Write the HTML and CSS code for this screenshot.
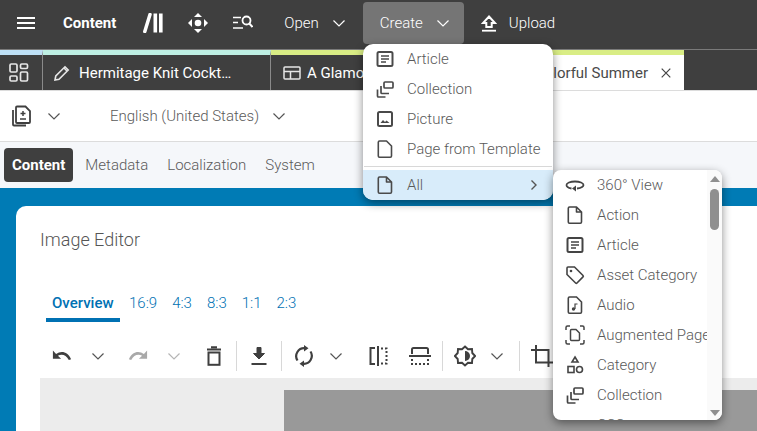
FILE: index.html
```html
<!DOCTYPE html>
<html lang="en">
<head>
<meta charset="utf-8">
<title>Image Editor</title>
<link rel="stylesheet" href="styles.css">
</head>
<body>
<svg class="defs" aria-hidden="true">
  <symbol id="chev" viewBox="0 0 14 14"><path d="M1.500 4.500 7 10l5.500-5.500" fill="none" stroke="currentColor" stroke-width="1.200"/></symbol>
  <symbol id="article" viewBox="0 0 20 20"><rect x="2.500" y="3" width="15" height="14" rx="1.500" fill="none" stroke="currentColor" stroke-width="2"/><path d="M6 7h8M6 10h8M6 13h5" stroke="currentColor" stroke-width="1.400"/></symbol>
  <symbol id="collection" viewBox="0 0 20 20"><g fill="none" stroke="currentColor" stroke-width="1.700"><rect x="9" y="3" width="9" height="6" rx="1"/><path d="M6 7v6.500a1 1 0 0 0 1 1h7"/><path d="M2.500 10.500V17a1 1 0 0 0 1 1h7"/></g></symbol>
  <symbol id="picture" viewBox="0 0 20 20"><rect x="3" y="3" width="14" height="14" rx="1.500" fill="none" stroke="currentColor" stroke-width="2"/><path d="M5.500 14l2.500-3 2 2 1.500-1.500 3 2.500z" fill="currentColor"/></symbol>
  <symbol id="file" viewBox="0 0 20 20"><path d="M4.500 2h7L16.500 7v10a1.200 1.200 0 0 1-1.200 1.200H4.500A1.200 1.200 0 0 1 3.300 17V3.200A1.200 1.200 0 0 1 4.500 2zM11.500 2v5h5" fill="none" stroke="currentColor" stroke-width="1.600" stroke-linejoin="round"/></symbol>
  <symbol id="fileplain" viewBox="0 0 20 20"><path d="M4.500 2h7L16.500 7v10a1.200 1.200 0 0 1-1.200 1.200H4.500A1.200 1.200 0 0 1 3.300 17V3.200A1.200 1.200 0 0 1 4.500 2z" fill="none" stroke="currentColor" stroke-width="1.600" stroke-linejoin="round"/></symbol>
</svg>

<header class="topbar">
  <button class="top-btn burger" type="button" aria-label="Menu">
    <svg class="i18" viewBox="0 0 18 12"><path d="M0 1h18M0 6h18M0 11h18" stroke="#fff" stroke-width="1.800"/></svg>
  </button>
  <span class="brand">Content</span>
  <svg class="lib" viewBox="0 0 20 20"><path d="M1.800 18.500 7 1.500" stroke="#fff" stroke-width="3.500" stroke-linecap="round" fill="none"/><rect x="10.500" y="0.500" width="3.600" height="19" fill="#fff"/><rect x="16" y="0.500" width="3.600" height="19" fill="#fff"/></svg>
  <svg class="move" viewBox="0 0 20 20"><circle cx="10" cy="10" r="3.300" fill="#fff"/><path d="M6 4 10 0l4 4z M6 16l4 4 4-4z M4 6 0 10l4 4z M16 6l4 4-4 4z" fill="#fff"/></svg>
  <svg class="lsearch" viewBox="0 0 20 16"><path d="M0 2.500h8M0 7.500h5M0 13h10" stroke="#fff" stroke-width="1.700"/><circle cx="13.500" cy="5.500" r="4" fill="none" stroke="#fff" stroke-width="1.800"/><path d="m16.300 8.500 3.200 3.500" stroke="#fff" stroke-width="2"/></svg>
  <button class="top-btn open" type="button">Open <svg class="chev c-w"><use href="#chev"/></svg></button>
  <button class="top-btn create" type="button">Create <svg class="chev c-w"><use href="#chev"/></svg></button>
  <button class="top-btn upload" type="button">
    <svg class="up" viewBox="0 0 16 17"><path d="M8 1.500 14 8h-3.300v4H5.300V8H2z" fill="none" stroke="#fff" stroke-width="2"/><path d="M1 15.700h14" stroke="#fff" stroke-width="1.800"/></svg>
    Upload
  </button>
</header>

<nav class="tabs">
  <div class="tab tab-home">
    <svg class="grid-i" viewBox="0 0 20 20"><g fill="none" stroke="#e6e6e6" stroke-width="1.700"><rect x="1" y="1" width="7" height="8" rx="1.200"/><rect x="11.500" y="1" width="7" height="4.500" rx="1.200"/><rect x="1" y="13" width="7" height="5" rx="1.200"/><rect x="11.500" y="9" width="7" height="9" rx="1.200"/></g></svg>
  </div>
  <div class="tab tab-one">
    <svg class="pen" viewBox="0 0 18 18"><path d="M2 16l.8-4L12 2.800l3.200 3.200L6 15.200z" fill="none" stroke="#e6e6e6" stroke-width="1.600"/><path d="M11 4l3 3" stroke="#e6e6e6" stroke-width="1.600"/></svg>
    <span>Hermitage Knit Cockt…</span>
  </div>
  <div class="tab tab-two">
    <svg class="layout" viewBox="0 0 18 14"><g fill="none" stroke="#e6e6e6" stroke-width="1.500"><rect x="1" y="1" width="16" height="12" rx="1"/><path d="M1 5.500h16M7.500 5.500V13"/></g></svg>
    <span>A Glamorous</span>
  </div>
  <div class="tab tab-three">
    <span>A Colorful Summer</span>
    <svg class="close" viewBox="0 0 10 10"><path d="M.7.700l8.600 8.600M9.300.700.7 9.300" stroke="#444" stroke-width="1.200"/></svg>
  </div>
</nav>

<div class="lang-bar">
  <svg class="rev" viewBox="0 0 20 22"><g fill="none" stroke="#3f3f3f" stroke-width="1.800"><path d="M5 1.500h8.500L18 6v11a1 1 0 0 1-1 1H5a1 1 0 0 1-1-1V2.500a1 1 0 0 1 1-1z"/><path d="M1 5v14.500a1 1 0 0 0 1 1h12"/></g><path d="M11 6v5M8.500 8.500h5M8 14h6" stroke="#3f3f3f" stroke-width="1.500"/></svg>
  <svg class="chev c-g chev-rev"><use href="#chev"/></svg>
  <span class="lang">English (United States)</span>
  <svg class="chev c-g"><use href="#chev"/></svg>
</div>

<div class="section-tabs">
  <span class="stab active">Content</span>
  <span class="stab">Metadata</span>
  <span class="stab">Localization</span>
  <span class="stab">System</span>
</div>

<main class="canvas">
  <section class="card">
    <h1 class="title">Image Editor</h1>
    <div class="ratios">
      <span class="ratio current">Overview</span>
      <span class="ratio">16:9</span>
      <span class="ratio">4:3</span>
      <span class="ratio">8:3</span>
      <span class="ratio">1:1</span>
      <span class="ratio">2:3</span>
    </div>
    <div class="tools">
      <span class="tool"><svg class="ti" viewBox="0 0 22 14"><path d="M1 1v9h9L6.500 6.800C10 4.500 15.500 5 18.500 11.500l2.500-1C17.500 2 10 .5 4.500 4.800z" fill="#3f3f3f"/></svg></span>
      <span class="tool"><svg class="chev c-g"><use href="#chev"/></svg></span>
      <span class="tool mg4"><svg class="ti" viewBox="0 0 22 14"><path d="M21 1v9h-9l3.500-3.200C12 4.500 6.500 5 3.500 11.500L1 10.500C4.500 2 12 .5 17.500 4.800z" fill="#a9a9a9"/></svg></span>
      <span class="tool"><svg class="chev c-l"><use href="#chev"/></svg></span>
      <span class="tool mg4"><svg class="ti tall" viewBox="0 0 18 20"><path d="M2 3.500h14M6 1.200h6" stroke="#3f3f3f" stroke-width="2"/><rect x="3.500" y="6.500" width="11" height="12.300" fill="none" stroke="#3f3f3f" stroke-width="2"/></svg></span>
      <span class="sep"></span>
      <span class="tool"><svg class="ti tall" viewBox="0 0 18 20"><path d="M7 1.500h4v6h3.500L9 13 3.500 7.500H7z" fill="#3f3f3f" stroke="#3f3f3f" stroke-width="1"/><path d="M1.500 18h15" stroke="#3f3f3f" stroke-width="2"/></svg></span>
      <span class="sep"></span>
      <span class="tool"><svg class="ti rot" viewBox="0 0 20 22"><g fill="none" stroke="#3f3f3f" stroke-width="2.200"><path d="M3.500 15.500A8 8 0 0 1 11 3.200"/><path d="M16.500 6.500A8 8 0 0 1 9 18.800"/></g><path d="M10 0l4.500 3.200L10 6.500zM10 15.500 5.500 18.800 10 22z" fill="#3f3f3f"/></svg></span>
      <span class="tool narrow"><svg class="chev c-g"><use href="#chev"/></svg></span>
      <span class="tool mg10"><svg class="ti sq" viewBox="0 0 20 20"><path d="M7 2H2.500v16H7" fill="none" stroke="#3f3f3f" stroke-width="2"/><path d="M10 0v20" stroke="#3f3f3f" stroke-width="2"/><path d="M13 2.500h5.500v15H13" fill="none" stroke="#3f3f3f" stroke-width="2" stroke-dasharray="2 2"/></svg></span>
      <span class="tool mg6"><svg class="ti wide" viewBox="0 0 22 20"><path d="M3 8V3.500A1.500 1.500 0 0 1 4.500 2h13A1.500 1.500 0 0 1 19 3.500V8" fill="none" stroke="#3f3f3f" stroke-width="2"/><path d="M0 10h22" stroke="#3f3f3f" stroke-width="2"/><path d="M3 13v5h16v-5" fill="none" stroke="#3f3f3f" stroke-width="2" stroke-dasharray="2 2"/></svg></span>
      <span class="sep"></span>
      <span class="tool"><svg class="ti wide" viewBox="0 0 22 22"><path d="M11 1.500l3 2.800 4-.3.300 4 2.800 3-2.800 3-.3 4-4-.3-3 2.800-3-2.800-4 .3-.3-4L.9 11l2.800-3 .3-4 4 .3z" fill="none" stroke="#3f3f3f" stroke-width="1.900"/><path d="M11 6a5 5 0 0 1 0 10z" fill="#3f3f3f"/></svg></span>
      <span class="tool narrow"><svg class="chev c-g"><use href="#chev"/></svg></span>
      <span class="sep sep-wide"></span>
      <span class="tool"><svg class="ti wide" viewBox="0 0 22 22"><path d="M0 5h17.500V22M5 0v17.500h17" fill="none" stroke="#3f3f3f" stroke-width="2"/></svg></span>
    </div>
    <div class="stage"><div class="photo"></div></div>
  </section>
</main>

<div class="menu create-menu">
  <div class="mi"><svg class="mic"><use href="#article"/></svg>Article</div>
  <div class="mi"><svg class="mic"><use href="#collection"/></svg>Collection</div>
  <div class="mi"><svg class="mic"><use href="#picture"/></svg>Picture</div>
  <div class="mi"><svg class="mic"><use href="#fileplain"/></svg>Page from Template</div>
  <div class="mdiv"></div>
  <div class="mi selected"><svg class="mic"><use href="#file"/></svg>All<span class="gt"><svg viewBox="0 0 8 12"><path d="M1.500 1.500 6 6l-4.500 4.500" fill="none" stroke="#555" stroke-width="1.400"/></svg></span></div>
</div>

<div class="menu sub-menu">
  <div class="sub-list">
    <div class="si"><svg class="sic" viewBox="0 0 20 20"><path d="M6.500 13.500C3.500 13 1.500 11.800 1.500 10c0-2 3.800-3.500 8.500-3.500s8.500 1.500 8.500 3.500c0 1.800-2.500 3-6.500 3.500" fill="none" stroke="currentColor" stroke-width="1.800"/><path d="M11 10.500v6l-4-3z" fill="currentColor"/></svg>360° View</div>
    <div class="si"><svg class="sic"><use href="#file"/></svg>Action</div>
    <div class="si"><svg class="sic"><use href="#article"/></svg>Article</div>
    <div class="si"><svg class="sic" viewBox="0 0 20 20"><path d="M2 3a1 1 0 0 1 1-1h6.500l8.500 8.500a1 1 0 0 1 0 1.400L12 18a1 1 0 0 1-1.400 0L2 9.500z" fill="none" stroke="currentColor" stroke-width="1.600"/><circle cx="6" cy="6" r="1.300" fill="currentColor"/></svg>Asset Category</div>
    <div class="si"><svg class="sic" viewBox="0 0 20 20"><path d="M4.500 2h7L16.500 7v10a1.200 1.200 0 0 1-1.200 1.200H4.500A1.200 1.200 0 0 1 3.300 17V3.200A1.200 1.200 0 0 1 4.500 2z" fill="none" stroke="currentColor" stroke-width="1.600"/><circle cx="8.500" cy="14" r="1.700" fill="currentColor"/><path d="M10 14V9h2.500" fill="none" stroke="currentColor" stroke-width="1.200"/></svg>Audio</div>
    <div class="si"><svg class="sic" viewBox="0 0 20 20"><g fill="none" stroke="currentColor" stroke-width="1.500"><path d="M1 5V2.500A1.500 1.500 0 0 1 2.500 1H5M15 1h2.500A1.500 1.500 0 0 1 19 2.500V5M19 15v2.500a1.500 1.500 0 0 1-1.500 1.500H15M5 19H2.500A1.500 1.500 0 0 1 1 17.500V15"/><path d="M6.500 4.500h4.500l3.500 3.500v6.500a1 1 0 0 1-1 1h-7a1 1 0 0 1-1-1V5.500a1 1 0 0 1 1-1z"/></g></svg>Augmented Page</div>
    <div class="si"><svg class="sic" viewBox="0 0 20 20"><g fill="none" stroke="currentColor" stroke-width="1.600"><path d="M10 2l3 5H7z"/><rect x="3" y="11.500" width="6" height="6"/><circle cx="14.500" cy="14.500" r="3"/></g></svg>Category</div>
    <div class="si"><svg class="sic"><use href="#collection"/></svg>Collection</div>
    <div class="si">CSS</div>
  </div>
  <div class="scroll">
    <span class="arrow up-a"></span>
    <span class="thumb"></span>
    <span class="arrow down-a"></span>
  </div>
</div>
</body>
</html>
```

FILE: styles.css
```css
* { box-sizing: border-box; }
html, body { margin: 0; height: 100%; overflow: hidden; }
body {
  position: relative;
  display: flex;
  flex-direction: column;
  font-family: Roboto, "Liberation Sans", sans-serif;
  font-size: 15px;
  font-weight: 300;
  color: #5a5a5a;
  background: #fff;
}
.defs { display: none; }

.topbar {
  flex: none;
  height: 50px;
  display: flex;
  align-items: center;
  background: #3f3f3f;
  border-bottom: 1px solid #7a7a7a;
  color: #fff;
  padding-bottom: 3px;
}
.top-btn {
  display: flex;
  align-items: center;
  border: 0;
  background: none;
  color: #fff;
  font: inherit;
  padding: 0;
}
.burger { margin-left: 17px; }
.i18 { width: 18px; height: 12px; display: block; }
.brand { margin-left: 28px; font-weight: 700; }
.lib { width: 20px; height: 20px; margin-left: 27px; }
.move { width: 20px; height: 20px; margin-left: 25px; }
.lsearch { width: 20px; height: 16px; margin-left: 25px; }
.open { margin-left: 31px; gap: 13px; }
.chev { width: 14px; height: 14px; display: block; flex: none; }
.c-w { color: #fff; }
.c-g { color: #555; }
.c-l { color: #b5b5b5; }
.create {
  margin-left: 17px;
  width: 101px;
  height: 42px;
  background: #757575;
  border-radius: 4px;
  padding-left: 17px;
  gap: 13px;
}
.upload { margin-left: 17px; gap: 12px; }
.up { width: 16px; height: 17px; }

.tabs {
  flex: none;
  height: 41px;
  display: flex;
  background: #3f3f3f;
  border-bottom: 1px solid #dcdcdc;
  color: #fff;
  font-weight: 400;
}
.tab {
  display: flex;
  align-items: center;
  border-top: 5px solid;
  border-right: 1px solid #8a8a8a;
  gap: 8px;
}
.tab-home { width: 43px; border-top-color: #bfe1f6; padding-left: 9px; }
.tab-one { width: 228px; border-top-color: #bff0e4; padding-left: 10px; }
.tab-two { width: 120px; border-top-color: #d9ed85; padding-left: 12px; gap: 6px; border-right: 0; overflow: hidden; white-space: nowrap; }
.tab-three {
  width: 293px;
  border-top-color: #d9ed85;
  border-right: 0;
  background: #fff;
  color: #4a4a4a;
  justify-content: flex-end;
  padding-right: 13px;
  gap: 13px;
}
.grid-i { width: 20px; height: 20px; }
.pen { width: 18px; height: 18px; flex: none; }
.layout { width: 18px; height: 14px; flex: none; }
.close { width: 10px; height: 10px; flex: none; }

.lang-bar {
  flex: none;
  height: 51px;
  display: flex;
  align-items: center;
  background: #fff;
  border-bottom: 1px solid #dcdcdc;
  padding-left: 12px;
}
.rev { width: 20px; height: 22px; }
.chev-rev { margin-left: 15px; }
.lang { margin-left: 49px; margin-right: 13px; }

.section-tabs {
  flex: none;
  height: 46px;
  display: flex;
  align-items: center;
  gap: 19px;
  background: #f5f7fa;
  padding-left: 4px;
}
.stab { line-height: 34px; }
.stab.active {
  background: #3f3f3f;
  color: #fff;
  font-weight: 700;
  border-radius: 4px;
  padding: 0 8px;
  margin-right: -7px;
}

.canvas {
  flex: 1;
  min-height: 0;
  background: #007bb5;
  padding: 18px 0 0 16px;
  overflow: hidden;
}
.card {
  height: 100%;
  background: #fff;
  border-radius: 10px 0 0 0;
  padding: 23px 0 0 24px;
  overflow: hidden;
}
.title {
  margin: 0;
  font-size: 18px;
  line-height: 22px;
  font-weight: 300;
  color: #555;
}
.ratios {
  margin-top: 42px;
  display: flex;
  align-items: flex-start;
  color: #0071b3;
  height: 36px;
}
.ratio { line-height: 20px; margin-right: 15px; }
.ratio.current {
  width: 74px;
  margin-left: 6px;
  margin-right: 9px;
  padding: 0 0 0 6px;
  height: 29px;
  border-bottom: 4px solid #0071b3;
  font-weight: 500;
}
.tools {
  height: 38px;
  margin-top: 8px;
  padding-left: 4px;
  display: flex;
  align-items: center;
}
.tool {
  flex: none;
  width: 36px;
  display: flex;
  justify-content: center;
  align-items: center;
}
.narrow { width: 28px; }
.mg4 { margin-left: 4px; }
.mg6 { margin-left: 6px; }
.mg10 { margin-left: 10px; }
.ti { width: 20px; height: 14px; display: block; }
.ti.tall { width: 18px; height: 20px; }
.ti.rot { width: 20px; height: 22px; }
.ti.sq { width: 20px; height: 20px; }
.ti.wide { width: 22px; height: 22px; }
.sep { flex: none; width: 1px; height: 30px; background: #d8d8d8; margin: 0 4px; }
.sep-wide { margin-left: 8px; }
.stage {
  margin-top: 3px;
  height: 60px;
  background: #ececec;
  padding: 12px 0 0 244px;
}
.photo { height: 100%; background: #999; }

.menu {
  position: absolute;
  background: #fff;
  box-shadow: 0 3px 10px rgba(0, 0, 0, .45);
  color: #5a5a5a;
}
.create-menu {
  left: 363px;
  top: 44px;
  width: 190px;
  height: 156px;
  border-radius: 10px;
  overflow: hidden;
}
.mi {
  height: 30px;
  display: flex;
  align-items: center;
  padding-left: 12px;
  gap: 12px;
}
.mic { width: 20px; height: 20px; color: #4a4a4a; flex: none; }
.mdiv { height: 1px; background: #d8d8d8; margin: 2px 1px 3px; }
.mi.selected { background: #d8ecfa; height: 30px; }
.gt { margin-left: auto; margin-right: 15px; display: flex; }
.gt svg { width: 8px; height: 12px; }

.sub-menu {
  left: 553px;
  top: 170px;
  width: 169px;
  height: 250px;
  display: flex;
  border-radius: 8px;
  overflow: hidden;
}
.sub-list { width: 154px; overflow: hidden; white-space: nowrap; }
.si {
  height: 30px;
  display: flex;
  align-items: center;
  padding-left: 12px;
  gap: 12px;
}
.si:last-child { padding-left: 44px; }
.sic { width: 20px; height: 20px; color: #444; flex: none; }
.scroll {
  flex: 1;
  position: relative;
  background: #fafafa;
  display: flex;
  flex-direction: column;
  align-items: center;
}
.thumb { position: absolute; top: 19px; width: 9px; height: 41px; border-radius: 5px; background: #8f8f8f; }
.arrow { position: absolute; width: 0; height: 0; border-left: 5px solid transparent; border-right: 5px solid transparent; }
.up-a { top: 6px; border-bottom: 6px solid #8f8f8f; }
.down-a { bottom: 4px; border-top: 6px solid #8f8f8f; }
```
